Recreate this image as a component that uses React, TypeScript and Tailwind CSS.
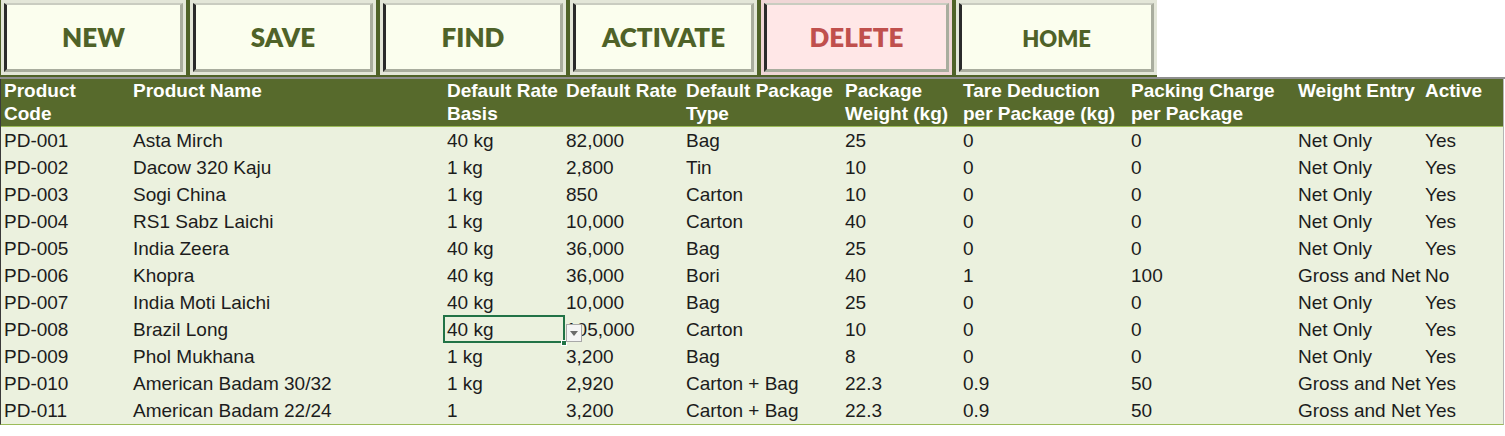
import React from 'react';

const buttons = [
  { label: 'NEW', w: 'w-[185px]', tone: 'normal' },
  { label: 'SAVE', w: 'w-[186px]', tone: 'normal' },
  { label: 'FIND', w: 'w-[186px]', tone: 'normal' },
  { label: 'ACTIVATE', w: 'w-[187px]', tone: 'normal' },
  { label: 'DELETE', w: 'w-[191px]', tone: 'delete' },
  { label: 'HOME', w: 'w-[201px]', tone: 'home' },
];

const headers = [
  ['Product', 'Code'],
  ['Product Name'],
  ['Default Rate', 'Basis'],
  ['Default Rate'],
  ['Default Package', 'Type'],
  ['Package', 'Weight (kg)'],
  ['Tare Deduction', 'per Package (kg)'],
  ['Packing Charge', 'per Package'],
  ['Weight Entry'],
  ['Active'],
];

const rows = [
  ['PD-001', 'Asta Mirch', '40 kg', '82,000', 'Bag', '25', '0', '0', 'Net Only', 'Yes'],
  ['PD-002', 'Dacow 320 Kaju', '1 kg', '2,800', 'Tin', '10', '0', '0', 'Net Only', 'Yes'],
  ['PD-003', 'Sogi China', '1 kg', '850', 'Carton', '10', '0', '0', 'Net Only', 'Yes'],
  ['PD-004', 'RS1 Sabz Laichi', '1 kg', '10,000', 'Carton', '40', '0', '0', 'Net Only', 'Yes'],
  ['PD-005', 'India Zeera', '40 kg', '36,000', 'Bag', '25', '0', '0', 'Net Only', 'Yes'],
  ['PD-006', 'Khopra', '40 kg', '36,000', 'Bori', '40', '1', '100', 'Gross and Net', 'No'],
  ['PD-007', 'India Moti Laichi', '40 kg', '10,000', 'Bag', '25', '0', '0', 'Net Only', 'Yes'],
  ['PD-008', 'Brazil Long', '40 kg', '105,000', 'Carton', '10', '0', '0', 'Net Only', 'Yes'],
  ['PD-009', 'Phol Mukhana', '1 kg', '3,200', 'Bag', '8', '0', '0', 'Net Only', 'Yes'],
  ['PD-010', 'American Badam 30/32', '1 kg', '2,920', 'Carton + Bag', '22.3', '0.9', '50', 'Gross and Net', 'Yes'],
  ['PD-011', 'American Badam 22/24', '1', '3,200', 'Carton + Bag', '22.3', '0.9', '50', 'Gross and Net', 'Yes'],
];

const cols = 'grid grid-cols-[129px_314px_119px_120px_159px_118px_168px_167px_127px_81px]';

function ToolButton({ label, w, tone }: { label: string; w: string; tone: string }) {
  const fill = tone === 'delete' ? 'bg-[#ffe7e7]' : 'bg-[#fbfeee]';
  const text =
    tone === 'delete'
      ? 'text-[#c0504d] text-[26px]'
      : tone === 'home'
        ? 'text-[#4f6228] text-[22px] pt-[3px]'
        : 'text-[#4f6228] text-[26px]';
  return (
    <div className={`${w} h-[75px] border-[3px] ${tone === 'delete' ? 'border-[#f0d6d6]' : 'border-[#e3e6d8]'}`}>
      <div
        className={`h-full flex items-center justify-center ${fill} border-l-[3px] border-l-[#2b2b2b] border-t-2 border-t-[#c9ccc0] border-r-[3px] border-r-[#a9ad9e] border-b-[3px] border-b-[#a9ad9e]`}
      >
        <span className={`font-['Lato',sans-serif] font-extrabold ${text}`}>{label}</span>
      </div>
    </div>
  );
}

export default function App() {
  return (
    <div className="w-[1505px] h-[436px] bg-white overflow-hidden font-['Liberation_Sans',Arial,sans-serif]">
      <div className="flex h-[79px] border-b-2 border-[#8f8f8f]">
        <div className="flex gap-[4px] bg-[#4f6228] pl-[1px] h-[77px]">
          {buttons.map((b) => (
            <ToolButton key={b.label} {...b} />
          ))}
        </div>
        <div className="flex-1 bg-white" />
      </div>

      <div className="w-[1504px] border-l border-l-[#3a3a3a] border-r border-r-[#b5b5b5] border-b border-b-[#9bbb59]">
        <div className={`${cols} bg-[#576a2c] h-[48px] text-white font-bold text-[19px] leading-[23px] border-b border-[#9bbb59]`}>
          {headers.map((h, i) => (
            <div key={i} className="pl-[3px] whitespace-nowrap">
              {h.map((line) => (
                <div key={line}>{line}</div>
              ))}
            </div>
          ))}
        </div>
        <div className="bg-[#ebf1de]">
          {rows.map((r, ri) => (
            <div key={ri} className={`${cols} h-[27px] text-[19px] text-[#1c1c1c] leading-[27px]`}>
              {r.map((c, ci) => {
                const selected = ri === 7 && ci === 2;
                return (
                  <div key={ci} className="relative pl-[3px] whitespace-nowrap">
                    {c}
                    {selected && (
                      <>
                        <div className="absolute -left-[1px] -top-[1px] w-[122px] h-[28px] border-2 border-[#217346]" />
                        <div className="absolute left-[117px] top-[24px] w-[6px] h-[6px] bg-[#217346] border border-white" />
                        <div className="absolute left-[122px] top-[8px] w-[16px] h-[18px] bg-[#f4f4f4] border border-[#a8a8a8] flex items-center justify-center z-10">
                          <svg width="8" height="5" viewBox="0 0 8 5">
                            <path d="M0 0h8L4 5z" fill="#6b6b6b" />
                          </svg>
                        </div>
                      </>
                    )}
                  </div>
                );
              })}
            </div>
          ))}
        </div>
      </div>
    </div>
  );
}
